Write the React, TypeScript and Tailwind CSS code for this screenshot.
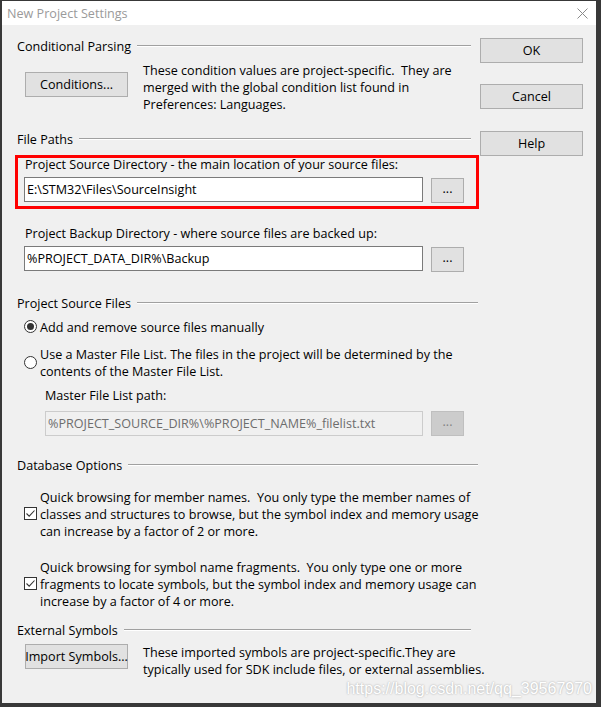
import React from 'react';

function GroupHeader({ label, short }: { label: string; short?: boolean }) {
  return (
    <div className={`flex items-center ${short ? 'w-[454px]' : 'w-[461px]'}`}>
      <span className="relative top-px whitespace-pre">{label}</span>
      <div className="ml-[6px] flex-1 border-t border-b border-t-[#a0a0a0] border-b-white" />
    </div>
  );
}

function WinButton({ children, className = '' }: { children: React.ReactNode; className?: string }) {
  return (
    <div className={`flex h-[25px] items-center justify-center border border-[#adadad] bg-[#e1e1e1] ${className}`}>
      {children}
    </div>
  );
}

function PathRow({ value }: { value: string }) {
  return (
    <div className="mt-[5px] flex items-start">
      <div className="ml-[7px] flex h-[25px] w-[399px] items-center border border-[#7a7a7a] bg-white pl-[2px]">{value}</div>
      <WinButton className="ml-[8px] mt-px w-[33px] pb-[4px]">...</WinButton>
    </div>
  );
}

function Radio({ checked }: { checked?: boolean }) {
  return (
    <div className="flex h-[13px] w-[13px] shrink-0 items-center justify-center rounded-full border border-[#333] bg-white">
      {checked && <div className="h-[7px] w-[7px] rounded-full bg-[#333]" />}
    </div>
  );
}

function Check() {
  return (
    <div className="h-[13px] w-[13px] shrink-0 border border-[#333] bg-white">
      <svg width="11" height="11" viewBox="0 0 11 11">
        <path d="M1.5 5.5 L4.2 8.2 L9.5 2.5" fill="none" stroke="#333" strokeWidth="1.1" />
      </svg>
    </div>
  );
}

export default function App() {
  return (
    <div className="relative flex h-[707px] w-[601px] flex-col border-t border-l-2 border-r-[5px] border-b-4 border-[#383838] bg-[#f0f0f0] font-['Open_Sans',sans-serif] text-[12.6px] leading-[17px] text-black">
      {/* title bar */}
      <div className="flex h-[24px] shrink-0 items-center justify-between bg-white pl-[5px] pr-[8px]">
        <span className="text-[#9a9a9a]">New Project Settings</span>
        <svg width="11" height="11" viewBox="0 0 11 11">
          <path d="M0.5 0.5 L10.5 10.5 M10.5 0.5 L0.5 10.5" stroke="#8a8a8a" strokeWidth="1" />
        </svg>
      </div>

      <div className="flex flex-1 pl-[15px]">
        {/* left column */}
        <div className="flex w-[461px] flex-col">
          <div className="mt-[12px]">
            <GroupHeader label="Conditional Parsing" short />
          </div>
          <div className="mt-[7px] flex items-start">
            <WinButton className="ml-[8px] mt-[11px] w-[103px]">Conditions...</WinButton>
            <div className="relative top-px ml-[15px] whitespace-pre">
              <div>These condition values are project-specific.  They are</div>
              <div>merged with the global condition list found in</div>
              <div>Preferences: Languages.</div>
            </div>
          </div>

          <div className="mt-[18px]">
            <GroupHeader label="File Paths" short />
          </div>
          <div className="relative mt-[8px]">
            <div className="relative top-px pl-[8px]">Project Source Directory - the main location of your source files:</div>
            <PathRow value="E:\STM32\Files\SourceInsight" />
            <div className="pointer-events-none absolute left-[-2px] top-0 h-[54px] w-[464px] border-[3px] border-[#ff0000]" />
          </div>
          <div className="relative top-px mt-[21px] pl-[8px]">Project Backup Directory - where source files are backed up:</div>
          <PathRow value="%PROJECT_DATA_DIR%\Backup" />

          <div className="mt-[22px]">
            <GroupHeader label="Project Source Files" />
          </div>
          <div className="mt-[7px] flex items-center pl-[7px]">
            <Radio checked />
            <span className="relative top-px ml-[3px]">Add and remove source files manually</span>
          </div>
          <div className="mt-[10px] flex items-center pl-[7px]">
            <Radio />
            <div className="relative top-px ml-[3px]">
              <div>Use a Master File List. The files in the project will be determined by the</div>
              <div>contents of the Master File List.</div>
            </div>
          </div>
          <div className="relative top-px mt-[7px] pl-[28px]">Master File List path:</div>
          <div className="mt-[8px] flex items-start">
            <div className="ml-[28px] flex h-[25px] w-[378px] items-center border border-[#cccccc] bg-[#f0f0f0] pl-[2px] text-[#6d6d6d]">
              %PROJECT_SOURCE_DIR%\%PROJECT_NAME%_filelist.txt
            </div>
            <div className="ml-[8px] flex h-[25px] w-[33px] items-center justify-center border border-[#bfbfbf] bg-[#cccccc] pb-[4px] text-[#838383]">
              ...
            </div>
          </div>

          <div className="mt-[20px]">
            <GroupHeader label="Database Options" />
          </div>
          <div className="mt-[15px] flex items-center pl-[7px]">
            <Check />
            <div className="relative top-px ml-[3px] whitespace-pre">
              <div>Quick browsing for member names.  You only type the member names of</div>
              <div>classes and structures to browse, but the symbol index and memory usage</div>
              <div>can increase by a factor of 2 or more.</div>
            </div>
          </div>
          <div className="mt-[19px] flex items-center pl-[7px]">
            <Check />
            <div className="relative top-px ml-[3px] whitespace-pre">
              <div>Quick browsing for symbol name fragments.  You only type one or more</div>
              <div>fragments to locate symbols, but the symbol index and memory usage can</div>
              <div>increase by a factor of 4 or more.</div>
            </div>
          </div>

          <div className="mt-[12px]">
            <GroupHeader label="External Symbols" short />
          </div>
          <div className="mt-[5px] flex items-start">
            <WinButton className="ml-[8px] mt-px w-[103px] whitespace-nowrap">Import Symbols...</WinButton>
            <div className="relative top-px ml-[15px] whitespace-pre">
              <div>These imported symbols are project-specific.They are</div>
              <div>typically used for SDK include files, or external assemblies.</div>
            </div>
          </div>
        </div>

        {/* right column */}
        <div className="ml-[2px] flex w-[103px] flex-col pt-[13px]">
          <WinButton>OK</WinButton>
          <WinButton className="mt-[21px]">Cancel</WinButton>
          <WinButton className="mt-[22px]">Help</WinButton>
        </div>
      </div>

      <div className="absolute bottom-[5px] right-[4px] font-['Liberation_Sans',Arial,sans-serif] text-[16px] leading-[18px] text-white [text-shadow:0_0_2px_rgba(0,0,0,0.35)]">
        https://blog.csdn.net/qq_39567970
      </div>
    </div>
  );
}
